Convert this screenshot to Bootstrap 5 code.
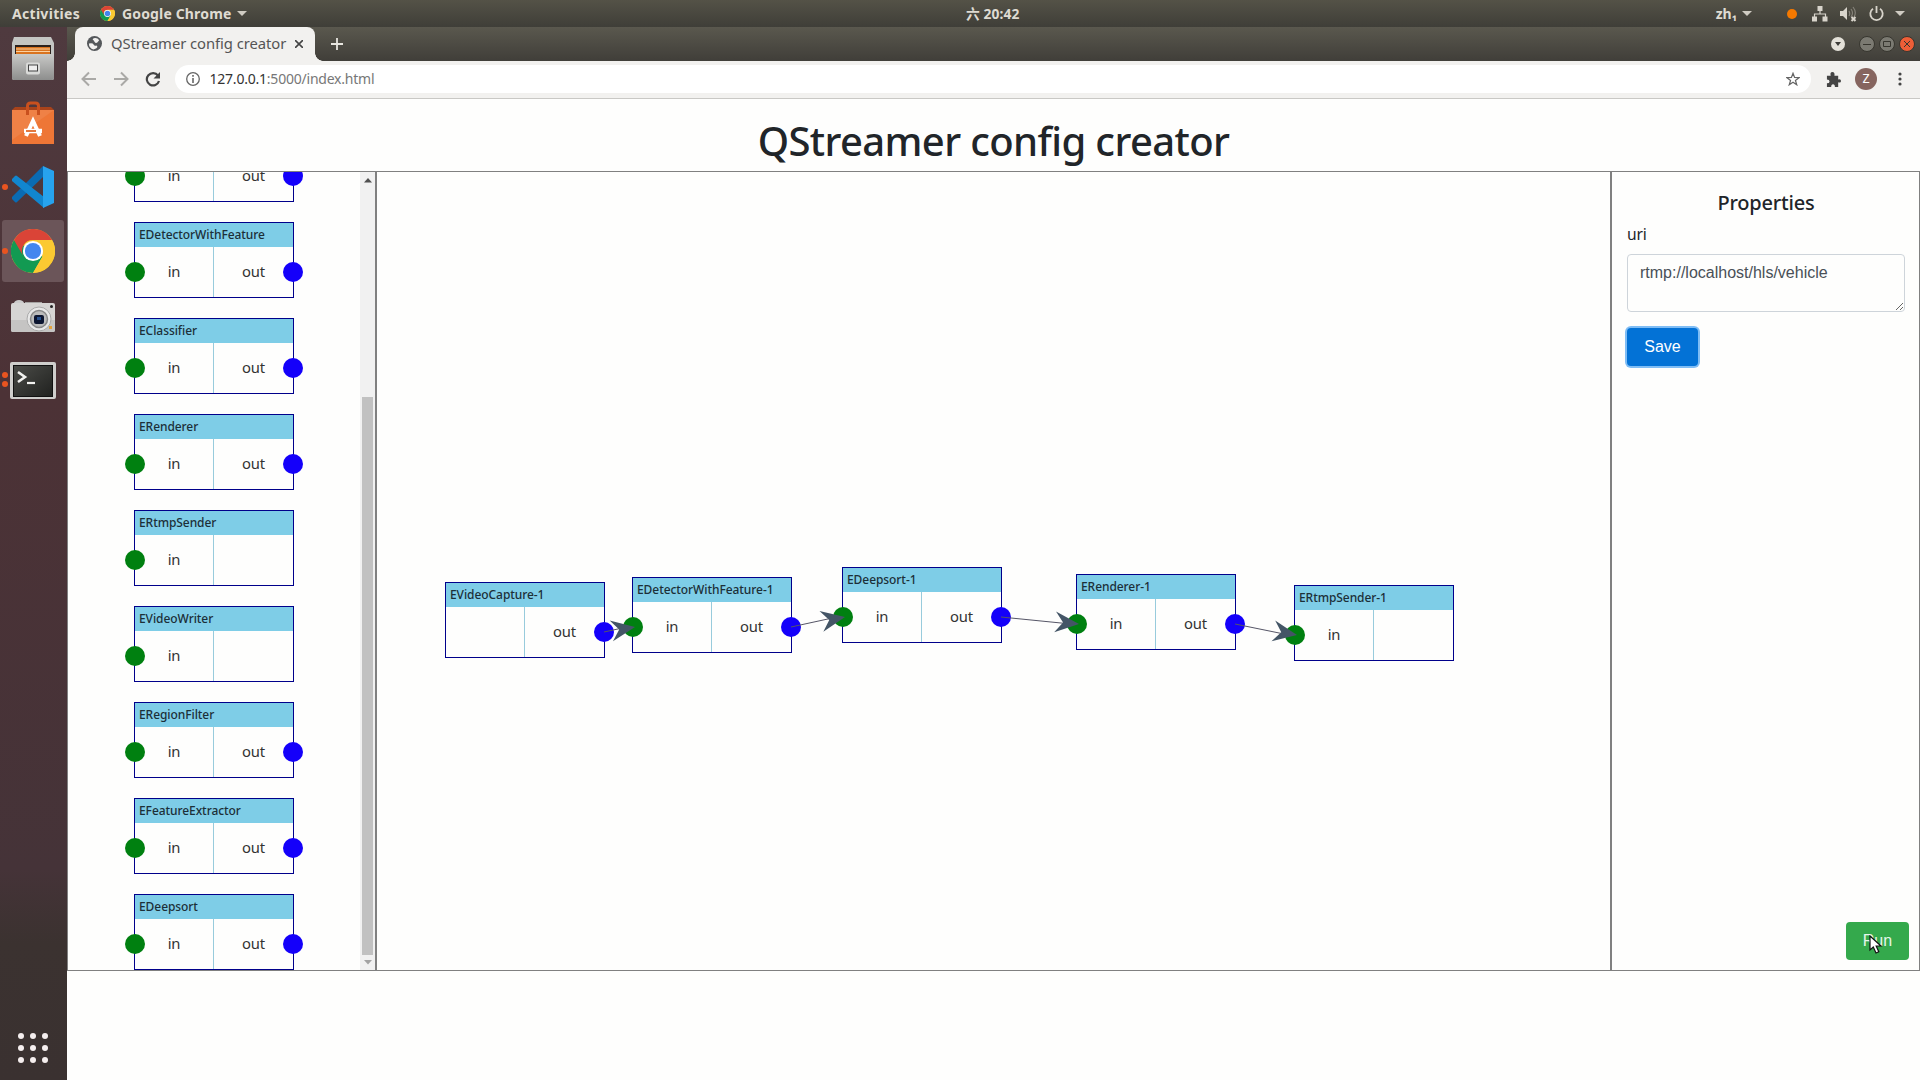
<!DOCTYPE html>
<html lang="zh">
<head>
<meta charset="utf-8">
<title>QStreamer config creator</title>
<link href="https://cdn.jsdelivr.net/npm/bootstrap@5.3.0/dist/css/bootstrap.min.css" rel="stylesheet">
<style>
html,body{height:100%;overflow:hidden}
body{font-family:"Noto Sans","Noto Sans CJK SC",sans-serif;background:#fefefd;color:#212529}
svg{display:block;flex:none}
/* desktop shell */
.topbar{height:27px;background:linear-gradient(#545247,#3f3e38);color:#dfdbd2;font-size:14px;font-weight:700;line-height:27px;position:relative}
.clock{left:966px;font-size:13.8px;letter-spacing:.1px}
.dock{width:67px;background:linear-gradient(#4f3a3f 0,#4c3236 35%,#453338 80%,#3b3230 87%,#3a3130 100%)}
.slot{height:64px;position:relative}
.slot.active::before{content:"";position:absolute;left:2px;top:1px;width:62px;height:62px;border-radius:3px;background:#6b5559}
.slot svg{position:relative}
.run-dot{position:absolute;left:2px;width:6px;height:6px;border-radius:50%;background:#e95420}
.tabstrip{height:34px;background:linear-gradient(#5a584e,#403e39)}
.tabstrip > *{padding-bottom:1px}
.chrome-tab{width:240px;height:34px;background:#f2f1ef;border-radius:8px 8px 0 0;font-size:14.8px;color:#555;position:relative;letter-spacing:-.06px}
.chrome-tab::before,.chrome-tab::after{content:"";position:absolute;bottom:0;width:8px;height:8px}
.chrome-tab::before{left:-8px;background:radial-gradient(circle at 0 0,transparent 7.5px,#f2f1ef 8px)}
.chrome-tab::after{right:-8px;background:radial-gradient(circle at 100% 0,transparent 7.5px,#f2f1ef 8px)}
.toolbar{height:38px;background:#f2f1ef;border-bottom:1px solid #c9c8c5;padding:0 18px 1px 0}
.omnibox{height:28px;border-radius:14px;background:#fff;font-size:14px;color:#777;letter-spacing:-.22px;line-height:26px}
.omnibox b{font-weight:400;color:#333}
/* page */
.page-title{height:72px;font-size:40px;font-weight:540;line-height:83px;letter-spacing:-.62px}
.workspace{height:800px}
.pane{border:1px solid gray;overflow:hidden}
.palette{width:309px}
.palette-list{margin-top:-46px;gap:20px;padding-left:66px}
.track{width:15px;background:#f1f1f1}
.thumb{width:11px;height:558px;margin-top:214px;background:#c1c1c1}
.stage{width:1235px;position:relative}
.block{width:160px;height:76px;border:1px solid #00008b;position:relative;flex:none;background:#fefefd}
.block-name{height:24px;background:#7ecde7;padding-left:4px;font-size:12px;font-weight:540;line-height:24px;letter-spacing:-.07px;color:#1c2f38}
.port{width:78px;height:50px;padding-bottom:1px;font-size:14.8px;letter-spacing:-.15px;color:#333}
.port + .port{width:80px;border-left:1px solid #98cbdc}
.dot-in,.dot-out{position:absolute;top:39px;width:20px;height:20px;border-radius:50%}
.dot-in{left:-10px;background:#008010}
.dot-out{right:-10px;background:#1400fa}
.free{position:absolute}
.props{padding:0 14px 10px 15px}
.props h5{font-size:20px;font-weight:540;letter-spacing:-.2px;line-height:24px;margin:19px 0 7px}
.props label{font-size:15.6px;line-height:24px;letter-spacing:-.2px}
.props .form-control,.btn{font-family:"Liberation Sans",Arial,sans-serif;font-size:16px}
.props .form-control{height:58px;border-color:#ced4da;padding:6px 12px;color:#495057;border-radius:4px;background:#fefefd;margin-top:8px}
.btn{border-radius:4px;padding:6px 16px}
.btn-save{background:#0372d6;color:#fff;box-shadow:0 0 0 2px #7fbdf5;height:38px;width:71px;margin-top:16px}
.btn-run{background:#34a94c;color:#e6f6e9;width:63px;height:38px;padding:6px 0;margin-right:-4px}
.pointer{position:absolute;left:1869px;top:935px}
</style>
<script src="https://cdn.jsdelivr.net/npm/bootstrap@5.3.0/dist/js/bootstrap.bundle.min.js"></script>
</head>
<body class="d-flex flex-column">

<svg width="0" height="0" class="position-absolute">
  <symbol id="chrome" viewBox="0 0 48 48">
    <circle cx="24" cy="24" r="24" fill="#fbc932"/>
    <path d="M24 24 3.200 12A24 24 0 0 0 24 48L34.400 30z" fill="#129a52"/>
    <path d="M34.400 30 24 48A24 24 0 0 0 44.800 12H24z" fill="#fbc932"/>
    <path d="M3.200 12 13.600 30A12 12 0 0 1 24 12H44.800A24 24 0 0 0 3.200 12z" fill="#da4437"/>
    <circle cx="24" cy="24" r="11" fill="#fff"/><circle cx="24" cy="24" r="8.800" fill="#4486ee"/>
  </symbol>
</svg>

<header class="topbar d-flex align-items-center">
  <span style="letter-spacing:.3px;margin-left:12px">Activities</span>
  <svg width="15" height="15" style="margin-left:20px"><use href="#chrome"/></svg>
  <span style="letter-spacing:.15px;margin-left:7px">Google Chrome</span>
  <svg width="10" height="6" style="margin-left:6px"><path d="M0 0h10L5 5z" fill="#d0ccc3"/></svg>
  <span class="clock position-absolute">六 20:42</span>
  <span style="margin-left:auto">zh₁</span>
  <svg width="10" height="6" style="margin-left:5px"><path d="M0 0h10L5 5z" fill="#d0ccc3"/></svg>
  <svg width="10" height="10" style="margin-left:35px"><circle cx="5" cy="5" r="5" fill="#f57900"/></svg>
  <svg width="16" height="16" viewBox="0 0 16 16" style="margin-left:15px" fill="#d8d4cb"><path d="M5.500 0h5v5h-5zM0 10.500h5v5H0zM10.500 10.500h5v5h-5z"/><path d="M8 5v3M2.500 11V8h11v3" fill="none" stroke="#d8d4cb" stroke-width="1.200"/></svg>
  <svg width="17" height="16" viewBox="0 0 17 16" style="margin-left:12px"><path d="M0 5h3l4-4v13l-4-4H0z" fill="#d8d4cb"/><path d="M9 5q1.500 3 0 5M11 3q3 4 0 8M13 1q4 5 1 10" fill="none" stroke="#858279" stroke-width="1.200"/><path d="m11.500 11 4 4m0-4-4 4" stroke="#d8d4cb" stroke-width="2"/></svg>
  <svg width="15" height="16" viewBox="0 0 15 16" style="margin-left:12px" fill="none" stroke="#d8d4cb" stroke-width="1.800"><path d="M4 2.800a6.200 6.200 0 1 0 7 0M7.500 0v7"/></svg>
  <svg width="10" height="6" style="margin:0 15px 0 11px"><path d="M0 0h10L5 5z" fill="#d0ccc3"/></svg>
</header>

<div class="d-flex flex-grow-1">
  <nav class="dock d-flex flex-column flex-shrink-0">
    <div class="slot">
      <svg width="67" height="64" viewBox="0 27 67 64">
        <defs><linearGradient id="gm" x2="0" y2="1"><stop stop-color="#c9c9c7"/><stop offset="1" stop-color="#8d8e8d"/></linearGradient></defs>
        <path d="M14 37h37l3 6v35q0 2-2 2H14q-2 0-2-2V43z" fill="#c4c5c3"/><path d="M15 45h36v9H15z" fill="#2b211d"/>
        <path d="M16 47h34v7H16z" fill="#d9731f"/><path d="M16 49h34M16 51.500h34" stroke="#fbd0a0"/>
        <path d="M12 54h42v24q0 2-2 2H14q-2 0-2-2z" fill="url(#gm)"/>
        <rect x="26" y="62.500" width="14" height="12" rx="2" fill="#d9dad8"/><rect x="28.500" y="65" width="9" height="6" fill="#eee" stroke="#444"/>
      </svg>
    </div>
    <div class="slot">
      <svg width="67" height="64" viewBox="0 91 67 64">
        <path d="M12 110 15 107H51L54 110z" fill="#a8431b"/><path d="M12 110h42v34H12z" fill="#ee7636"/><path d="M12 110h42L12 140z" fill="#f08c56" opacity=".5"/>
        <path d="M27.500 115v-9q0-3 3-3h5q3 0 3 3v9" fill="none" stroke="#c9501e" stroke-width="3"/>
        <path d="m26 136 7-15 7 15" fill="none" stroke="#fff" stroke-width="4"/><path d="M24 131h18" stroke="#fff" stroke-width="4.500"/><path d="M26 131h10" stroke="#e06a2b" stroke-width="1.800"/>
      </svg>
    </div>
    <div class="slot">
      <span class="run-dot" style="top:29px"></span>
      <svg width="67" height="64" viewBox="0 155 67 64">
        <path d="M12 197 43 166V177L17 202q-1 1-2 0l-3-3z" fill="#0a6bb3"/>
        <path d="M12 179 15 176q1-1 2 0L44 197v11L12 181z" fill="#1186cf"/>
        <path d="M43 166 54 171v32L43 208z" fill="#27a3ee"/>
      </svg>
    </div>
    <div class="slot active">
      <svg width="67" height="64"><use href="#chrome" x="11" y="10" width="44" height="44"/></svg>
      <span class="run-dot" style="top:29px"></span>
    </div>
    <div class="slot">
      <svg width="67" height="64" viewBox="0 283 67 64">
        <ellipse cx="19" cy="303" rx="5" ry="3" fill="#ccc"/><path d="M25 302h17v3H25z" fill="#a5a3a2"/>
        <rect x="11" y="303" width="44" height="29" rx="2" fill="#d6d5d4"/><path d="M11 320h44v10q0 2-2 2H13q-2 0-2-2z" fill="#c5c4c3"/>
        <circle cx="39" cy="319" r="12" fill="#e8e8e8" stroke="#aaa"/><circle cx="39" cy="319" r="8.500" fill="#bbb" stroke="#888" stroke-width="1.500"/><rect x="34" y="315" width="10" height="9" rx="2" fill="#0c1530"/><path d="M37 317h4v3h-4z" fill="#264f8c"/>
        <circle cx="51.500" cy="306.500" r="1.500" fill="#222"/><path d="M49 326h3v3h-3z" fill="#e4a23c"/>
      </svg>
    </div>
    <div class="slot">
      <span class="run-dot" style="top:25px"></span><span class="run-dot" style="top:34px"></span>
      <svg width="67" height="64" viewBox="0 347 67 64">
        <defs><linearGradient id="gt" x2="1" y2="1"><stop stop-color="#4b4c48"/><stop offset="1" stop-color="#20211f"/></linearGradient></defs>
        <rect x="10" y="362" width="46" height="37" rx="2" fill="#cfcecc"/><rect x="13.500" y="365.500" width="39" height="31" fill="url(#gt)" stroke="#111"/>
        <path d="m18 372 7 5-7 5" fill="none" stroke="#f2f2f0" stroke-width="2.600"/><path d="M27 383h8" stroke="#f2f2f0" stroke-width="2.200"/>
      </svg>
    </div>
    <svg width="67" height="32" viewBox="0 0 67 32" class="mt-auto mb-3" fill="#f5eeee">
      <g id="r"><circle cx="21" cy="4" r="3"/><circle cx="33" cy="4" r="3"/><circle cx="45" cy="4" r="3"/></g><use href="#r" y="12"/><use href="#r" y="24"/>
    </svg>
  </nav>

  <main class="flex-grow-1 d-flex flex-column">
    <div class="tabstrip d-flex align-items-center">
      <div class="chrome-tab d-flex align-items-center ms-2">
        <svg width="15" height="15" viewBox="0 0 16 16" style="margin:0 9px 0 12px"><circle cx="8" cy="8" r="8" fill="#55585b"/><path d="M2 8q4-1 5 1t3 1q2 1 0 3l-3 1.500Q2 13 2 8zM7 2.500q4-1 6 2l-2 2.500q-2 1-3-1t-2-2z" fill="#f2f1ef"/></svg>
        <span>QStreamer config creator</span>
        <svg width="8" height="8" viewBox="0 0 8 8" style="margin-left:9px"><path d="m0 0 8 8M8 0 0 8" stroke="#444" stroke-width="1.600"/></svg>
      </div>
      <svg width="12" height="13" style="margin-left:16px"><path d="M6 0v12M0 6h12" stroke="#e8e6e0" stroke-width="1.800"/></svg>
      <div class="ms-auto d-flex align-items-center" style="padding-right:5px">
        <svg width="14" height="14" style="margin-right:14px"><circle cx="7" cy="7" r="7" fill="#e4e1d9"/><path d="M4 5h6L7 9z" fill="#3c3b37"/></svg>
        <svg width="56" height="16" viewBox="0 0 56 16"><g stroke="#37362f"><circle cx="8" cy="8" r="7.500" fill="#7b7a72"/><path d="M4 8.500h8"/><circle cx="28" cy="8" r="7.500" fill="#7b7a72"/><path d="M24.500 5.500h7v5h-7z" fill="none"/><circle cx="48" cy="8" r="7.500" fill="#ee5e37"/><path d="m45 5 6 6m0-6-6 6"/></g></svg>
      </div>
    </div>
    <div class="toolbar d-flex align-items-center">
      <svg width="96" height="16" viewBox="0 0 96 16" style="margin-left:14px" fill="none" stroke-width="2"><path d="M15 8H2m6-6.500L1.500 8 8 14.500M33 8h13m-6-6.500L46.500 8 40 14.500" stroke="#aaa9a6"/><path d="M77 4.500A6.200 6.200 0 1 0 78 10" stroke="#444" stroke-width="2.200"/><path d="M79 1v6.500h-6.500z" fill="#444"/></svg>
      <div class="omnibox flex-grow-1 d-flex align-items-center" style="margin-left:-2px;margin-right:15px;padding:0 11px">
        <svg width="14" height="14" style="margin-right:9.500px"><circle cx="7" cy="7" r="6.300" fill="none" stroke="#666" stroke-width="1.300"/><path d="M7 6v5M7 3v1.800" stroke="#666" stroke-width="1.600"/></svg>
        <span><b>127.0.0.1</b>:5000/index.html</span>
        <svg class="ms-auto" width="14" height="14" viewBox="0 0 16 16"><path d="m8 1.500 1.800 4.800 5 .2-4 3.100 1.500 5L8 11.700l-4.300 2.900 1.500-5-4-3.100 5-.2z" fill="none" stroke="#666" stroke-width="1.400"/></svg>
      </div>
      <svg width="15" height="15" viewBox="0 0 16 16" style="margin-right:14px"><path d="M1 4h4q-1-4 1.800-4T9 4h4v4q3-.8 3 1.600T13 11v5H9.500q0-3-2-3t-2 3H1v-4q2.800 0 2.800-2T1 8z" fill="#444"/></svg>
      <svg width="22" height="22" style="margin-right:21px"><circle cx="11" cy="11" r="11" fill="#86655f"/><text x="11" y="15" text-anchor="middle" font-size="12" font-family="Roboto" fill="#fff">Z</text></svg>
      <svg width="4" height="14" fill="#444"><circle cx="2" cy="2" r="1.600"/><circle cx="2" cy="7" r="1.600"/><circle cx="2" cy="12" r="1.600"/></svg>
    </div>

    <h1 class="page-title text-center m-0">QStreamer config creator</h1>

    <div class="workspace d-flex">
      <section class="pane palette d-flex">
        <div id="palette" class="palette-list d-flex flex-column flex-grow-1"></div>
        <div class="track d-flex flex-column align-items-center">
          <svg width="8" height="5" style="margin-top:6px"><path d="M0 4.500h8L4 0z" fill="#505050"/></svg>
          <div class="thumb"></div>
          <svg width="8" height="5" style="margin-top:5px;margin-bottom:auto"><path d="M0 0h8L4 4.500z" fill="#a3a3a3"/></svg>
        </div>
      </section>
      <section class="pane stage" id="stage"></section>
      <section class="pane props flex-grow-1 d-flex flex-column align-items-start">
        <h5 class="align-self-stretch text-center">Properties</h5>
        <label for="uri">uri</label>
        <textarea class="form-control" id="uri">rtmp://localhost/hls/vehicle</textarea>
        <button class="btn btn-save">Save</button>
        <button class="btn btn-run mt-auto align-self-end">Run</button>
      </section>
    </div>
  </main>
</div>

<svg class="pointer" width="14" height="20" viewBox="0 0 14 20"><path d="M1 1v14l3.300-3 2.700 6 2.800-1.200L7.200 11H12z" fill="#fff" stroke="#111" stroke-width="1.200"/></svg>

<script>
// ports: "i" = input, "o" = output
const block = (name, ports, style = '', cls = '') => `
  <div class="block ${cls}" ${style && `style="${style}"`}>
    <div class="block-name">${name}</div>
    <div class="d-flex">
      <div class="port d-flex align-items-center justify-content-center">${ports.includes('i') ? 'in' : ''}</div>
      <div class="port d-flex align-items-center justify-content-center">${ports.includes('o') ? 'out' : ''}</div>
    </div>
    ${ports.includes('i') ? '<span class="dot-in"></span>' : ''}${ports.includes('o') ? '<span class="dot-out"></span>' : ''}
  </div>`;

document.getElementById('palette').innerHTML = [
  ['', 'io'], ['EDetectorWithFeature', 'io'], ['EClassifier', 'io'], ['ERenderer', 'io'],
  ['ERtmpSender', 'i'], ['EVideoWriter', 'i'], ['ERegionFilter', 'io'],
  ['EFeatureExtractor', 'io'], ['EDeepsort', 'io']
].map(b => block(...b)).join('');

const nodes = [
  ['EVideoCapture-1', 'o', 68, 410], ['EDetectorWithFeature-1', 'io', 255, 405],
  ['EDeepsort-1', 'io', 465, 395], ['ERenderer-1', 'io', 699, 402], ['ERtmpSender-1', 'i', 917, 413]
];
let wires = '';
for (let k = 1; k < nodes.length; k++) {
  const [, , ax, ay] = nodes[k - 1], [, , bx, by] = nodes[k];
  const x1 = ax + 159, y1 = ay + 50, x2 = bx + 3, y2 = by + 50;
  const a = Math.atan2(y2 - y1, x2 - x1) * 180 / Math.PI;
  wires += `<path d="M${x1} ${y1}L${x2 - 8} ${y2}" stroke="#556" stroke-width="1"/>
    <path d="M0 0L-24-10.500L-16 0L-24 10.500z" fill="#456" transform="translate(${x2} ${y2}) rotate(${a})"/>`;
}
document.getElementById('stage').innerHTML =
  nodes.map(([n, p, x, y]) => block(n, p, `left:${x}px;top:${y}px`, 'free')).join('') +
  `<svg class="free top-0 start-0" width="1233" height="798">${wires}</svg>`;
</script>
</body>
</html>
